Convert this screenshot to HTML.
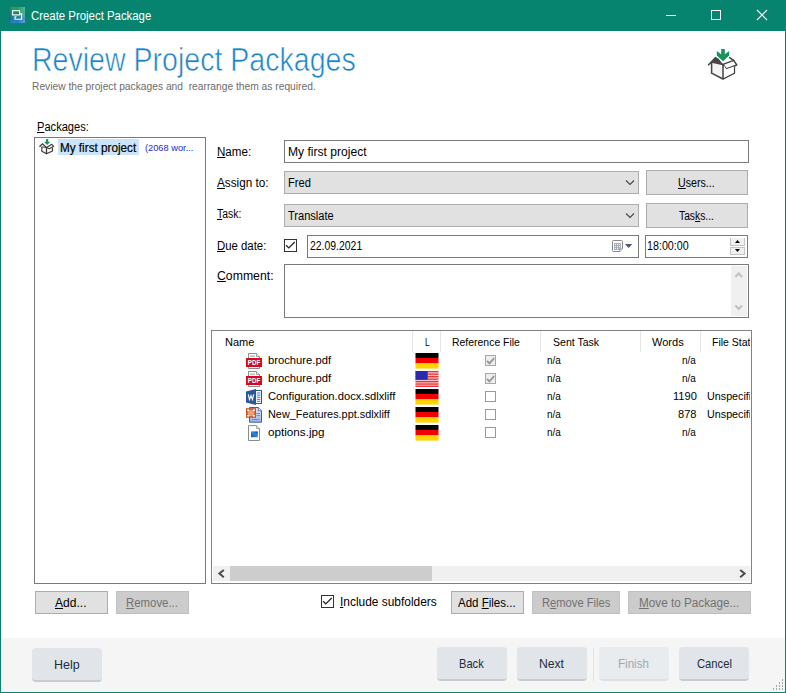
<!DOCTYPE html>
<html>
<head>
<meta charset="utf-8">
<title>Create Project Package</title>
<style>
*{box-sizing:border-box;margin:0;padding:0}
html,body{width:786px;height:693px;overflow:hidden;background:#fff}
body{position:relative;font-family:"Liberation Sans",sans-serif;font-size:12px;color:#000}
.a{position:absolute}
.t{position:absolute;white-space:nowrap;line-height:normal;transform-origin:0 0}
.t u{text-decoration:underline;text-underline-offset:1px;text-decoration-thickness:1px}
#tb{left:0;top:0;width:786px;height:31px;background:#07846f}
#bl{left:0;top:31px;width:1px;height:662px;background:#07846f}
#brd{left:785px;top:31px;width:1px;height:662px;background:#07846f}
#bb{left:0;top:692px;width:786px;height:1px;background:#07846f}
#foot{left:1px;top:638px;width:784px;height:54px;background:#f5f5f5}
.box{position:absolute;background:#fff;border:1px solid #7a7a7a}
.cmb{position:absolute;background:#e1e1e1;border:1px solid #adadad}
.btn{position:absolute;background:#e1e1e1;border:1px solid #adadad}
.btn.dis{background:#cccccc;border-color:#bfbfbf}
.fb{position:absolute;top:647px;width:70px;height:34px;background:#e1e5e9;border-radius:4px;border-bottom:2px solid #c6ccd2}
.fb.dis{background:#e9ecef;border-bottom-color:#dde1e5}
.cb{position:absolute;width:13px;height:13px;border:1px solid #333;background:#fff}
.lcb{position:absolute;left:485px;width:11px;height:11px;border:1px solid #9a9a9a;background:#fff}
.lcb.on{background:#eeeeee;border-color:#a8a8a8}
.hs{position:absolute;top:331px;width:1px;height:21px;background:#e5e5e5}
.sel{left:58px;top:139px;width:81px;height:16px;background:#cce4f7}
svg{position:absolute;overflow:visible}
</style>
</head>
<body>
<!-- window chrome -->
<div class="a" id="tb"></div>
<div class="a" id="bl"></div>
<div class="a" id="brd"></div>
<div class="a" id="foot"></div>
<div class="a" id="bb"></div>

<!-- app icon -->
<svg style="left:9px;top:7px" width="16" height="16" viewBox="0 0 16 16">
<defs>
<linearGradient id="ag" x1="0" y1="0" x2="0" y2="1"><stop offset="0" stop-color="#1da24a"/><stop offset="0.45" stop-color="#188c7c"/><stop offset="0.75" stop-color="#1a6fb0"/><stop offset="1" stop-color="#2380cc"/></linearGradient>
<linearGradient id="ag2" x1="0" y1="0" x2="1" y2="0"><stop offset="0" stop-color="#003060" stop-opacity="0.25"/><stop offset="0.5" stop-color="#fff" stop-opacity="0"/><stop offset="1" stop-color="#fff" stop-opacity="0.28"/></linearGradient>
</defs>
<rect x="0" y="0" width="16" height="16" fill="url(#ag)"/>
<rect x="0" y="0" width="16" height="16" fill="url(#ag2)"/>
<rect x="3.6" y="3.7" width="7" height="4.2" fill="#0f7a4c" fill-opacity="0.55" stroke="#fff" stroke-width="1.15"/>
<path d="M11 6.9 H12.6 V12.2 H6 V10.2 L7.4 9.4" fill="none" stroke="#fff" stroke-width="1.15"/>
</svg>

<!-- caption buttons -->
<svg style="left:660px;top:0" width="126" height="31" viewBox="0 0 126 31">
<path d="M6 15.5 H16" stroke="#fff" stroke-width="1" fill="none"/>
<rect x="51.5" y="10.5" width="9" height="9" stroke="#fff" stroke-width="1" fill="none"/>
<path d="M97 10 L107 20 M107 10 L97 20" stroke="#fff" stroke-width="1.1" fill="none"/>
</svg>

<!-- header package icon (30x31) -->
<svg style="left:708px;top:49px" width="30" height="31" viewBox="0 0 30 31">
<g id="pkg">
<path d="M3.8 12.6 L7.6 8.6 L10.4 9.4 L15 15.2 Z" fill="#444"/>
<path d="M3.6 13 V24.2 L15 30 L26.4 24.2 V17.6" fill="#f4f4f4" stroke="#444" stroke-width="1.5" stroke-linejoin="round"/>
<path d="M15 15.4 L25.7 11.4 L28.8 16 L18.3 20 Z" fill="#fafafa" stroke="#444" stroke-width="1.4" stroke-linejoin="round"/>
<path d="M15.7 16.2 L18.3 20.2 L25.7 17.4 V23.8 L15.7 28.9 Z" fill="#fff"/><path d="M15 15.6 V30" stroke="#444" stroke-width="1.5" fill="none"/>
<path d="M3.6 12.9 L15 15.5" stroke="#444" stroke-width="1.5" fill="none"/>
<path d="M0.6 15.8 L7.6 8.6" stroke="#444" stroke-width="1.6" fill="none" stroke-linecap="round"/>
<path d="M21.6 8.6 L25.7 11.4" stroke="#444" stroke-width="1.5" fill="none" stroke-linecap="round"/>
<path d="M13.2 0 H16.8 V5.2 L21.2 2 V6.4 L15 12.2 L8.8 6.4 V2 L13.2 5.2 Z" fill="#17935c"/>
</g>
</svg>

<!-- packages list -->
<div class="box" style="left:34px;top:137px;width:172px;height:447px"></div>
<div class="a sel"></div>
<svg style="left:39px;top:139px" width="15" height="16" viewBox="0 0 15 16">
<path d="M2.8 7.8 V12.2 L7.5 14.8 L13.5 11.9 V8.8" fill="#f7f7f7" stroke="#3a3a3a" stroke-width="1.15" stroke-linejoin="round"/>
<path d="M7.5 8.5 L12.8 5.3 L14.7 7.3 L10.3 9.7 Z" fill="#fff" stroke="#3a3a3a" stroke-width="1.05" stroke-linejoin="round"/>
<path d="M7.5 8.5 V14.8" stroke="#3a3a3a" stroke-width="1.2" fill="none"/>
<path d="M0.5 7.8 L3.4 4.9 L7.5 8.5" stroke="#3a3a3a" stroke-width="1.25" fill="none" stroke-linejoin="miter"/>
<path d="M2.8 7.8 L7.5 8.6" stroke="#3a3a3a" stroke-width="0.9" fill="none"/>
<path d="M7.1 0 H9.2 V2.7 H11.3 L8.15 6 L5 2.7 H7.1 Z" fill="#17935c"/>
</svg>

<!-- form -->
<div class="box" style="left:284px;top:140px;width:465px;height:23px"></div>
<div class="cmb" style="left:284px;top:171px;width:355px;height:23px"></div>
<div class="btn" style="left:646px;top:170px;width:102px;height:25px"></div>
<div class="cmb" style="left:284px;top:204px;width:355px;height:23px"></div>
<div class="btn" style="left:646px;top:203px;width:102px;height:25px"></div>
<svg style="left:625px;top:179px" width="10" height="8" viewBox="0 0 10 8"><path d="M1 1.5 L5 5.5 L9 1.5" fill="none" stroke="#444" stroke-width="1.1"/></svg>
<svg style="left:625px;top:212px" width="10" height="8" viewBox="0 0 10 8"><path d="M1 1.5 L5 5.5 L9 1.5" fill="none" stroke="#444" stroke-width="1.1"/></svg>

<div class="cb" style="left:284px;top:239px"></div>
<svg style="left:284px;top:239px" width="13" height="13" viewBox="0 0 13 13"><path d="M2.1 6.2 L4.8 8.9 L10.7 3" fill="none" stroke="#222" stroke-width="1.25"/></svg>
<div class="box" style="left:307px;top:235px;width:332px;height:23px"></div>
<div class="box" style="left:645px;top:235px;width:103px;height:23px"></div>
<!-- calendar icon -->
<svg style="left:612px;top:240px" width="21" height="12" viewBox="0 0 21 12">
<path d="M1.5 0.5 H9.5 Q10.5 0.5 10.5 1.5 V8.5 L8 11.5 H1.5 Q0.5 11.5 0.5 10.5 V1.5 Q0.5 0.5 1.5 0.5 Z" fill="#fff" stroke="#888" stroke-width="1"/>
<rect x="2" y="3" width="7" height="7" fill="#a9b1bd"/>
<g fill="#eef1f5"><rect x="3" y="4" width="1" height="1"/><rect x="5" y="4" width="1" height="1"/><rect x="7" y="4" width="1" height="1"/><rect x="3" y="6" width="1" height="1"/><rect x="5" y="6" width="1" height="1"/><rect x="7" y="6" width="1" height="1"/><rect x="3" y="8" width="1" height="1"/><rect x="5" y="8" width="1" height="1"/></g>
<path d="M8 11.5 V9 H10.5" fill="#fff" stroke="#888" stroke-width="0.8"/>
<path d="M13 4 H20.2 L16.6 8 Z" fill="#48547a"/>
</svg>
<!-- spinner -->
<div class="a" style="left:730px;top:238px;width:15px;height:8px;background:#f0f0f0;border:1px solid #c4c4c4;border-top:none"></div>
<div class="a" style="left:730px;top:247px;width:15px;height:8px;background:#f0f0f0;border:1px solid #c4c4c4"></div>
<svg style="left:730px;top:237px" width="15" height="18" viewBox="0 0 15 18"><path d="M5 6 L7.5 3 L10 6 Z" fill="#000"/><path d="M5 12 L7.5 15 L10 12 Z" fill="#000"/></svg>

<!-- comment -->
<div class="box" style="left:284px;top:264px;width:465px;height:54px"></div>
<div class="a" style="left:731px;top:266px;width:16px;height:50px;background:#f0f0f0"></div>
<svg style="left:731px;top:266px" width="16" height="50" viewBox="0 0 16 50"><path d="M4.3 11 L7.7 7.4 L11.1 11" fill="none" stroke="#c0c0c0" stroke-width="2.1"/><path d="M4.3 39.4 L7.7 43 L11.1 39.4" fill="none" stroke="#c0c0c0" stroke-width="2.1"/></svg>

<!-- file list -->
<div class="box" style="left:211px;top:330px;width:541px;height:254px;border-color:#828282"></div>
<div class="hs" style="left:412px"></div>
<div class="hs" style="left:440px"></div>
<div class="hs" style="left:540px"></div>
<div class="hs" style="left:640px"></div>
<div class="hs" style="left:700px"></div>
<!-- scrollbar -->
<div class="a" style="left:213px;top:566px;width:537px;height:15px;background:#f0f0f0"></div>
<div class="a" style="left:230px;top:566px;width:202px;height:15px;background:#cdcdcd"></div>
<svg style="left:213px;top:566px" width="537" height="16" viewBox="0 0 537 16"><path d="M10.8 4 L6.4 7.6 L10.8 11.2" fill="none" stroke="#4a4a4a" stroke-width="2"/><path d="M527.2 4 L531.6 7.6 L527.2 11.2" fill="none" stroke="#4a4a4a" stroke-width="2"/></svg>

<!-- file icons -->
<svg style="left:246px;top:353px" width="16" height="16" viewBox="0 0 16 16"><g id="pdf">
<path d="M2.5 0.5 H10.5 L13.5 3.5 V15.5 H2.5 Z" fill="#fff" stroke="#8c8c8c" stroke-width="1"/>
<path d="M10.5 0.5 V3.5 H13.5" fill="#f0f0f0" stroke="#8c8c8c" stroke-width="0.8"/>
<rect x="4" y="2.6" width="5" height="1" fill="#9a9a9a"/>
<rect x="0" y="5" width="16" height="9" fill="#d10a1f"/>
<text x="8" y="12.4" font-family="Liberation Sans, sans-serif" font-weight="bold" font-size="7.4" text-anchor="middle" fill="#fff" textLength="12.4" lengthAdjust="spacingAndGlyphs">PDF</text>
</g></svg>
<svg style="left:246px;top:371px" width="16" height="16" viewBox="0 0 16 16"><use href="#pdf"/></svg>
<!-- word -->
<svg style="left:246px;top:389px" width="16" height="16" viewBox="0 0 16 16">
<rect x="9" y="1.5" width="6.5" height="13" fill="#fff" stroke="#2b579a" stroke-width="1"/>
<g stroke="#2b579a" stroke-width="0.85"><path d="M10.8 4 H14.4 M10.8 6.1 H14.4 M10.8 8.2 H14.4 M10.8 10.3 H14.4 M10.8 12.3 H14.4"/></g>
<path d="M0 2.4 L10 0 V16 L0 13.6 Z" fill="#2b579a"/>
<path d="M2.3 5.4 L3.5 10.6 L5 6.6 L6.4 10.6 L7.7 5.4" fill="none" stroke="#fff" stroke-width="1.15" stroke-linejoin="miter"/>
</svg>
<!-- ppt -->
<svg style="left:246px;top:407px" width="16" height="16" viewBox="0 0 16 16">
<defs><linearGradient id="pg" x1="0" y1="0" x2="0" y2="1"><stop offset="0" stop-color="#dfe8f8"/><stop offset="1" stop-color="#9cb6e6"/></linearGradient></defs>
<path d="M3.5 0.5 H12.3 L15.5 3.7 V15.2 H3.5 Z" fill="url(#pg)" stroke="#3f5f9f" stroke-width="1"/>
<path d="M12.3 0.5 V3.7 H15.5" fill="#eef3fc" stroke="#3f5f9f" stroke-width="0.8"/>
<g stroke="#6a86c2" stroke-width="0.9"><path d="M10.5 6.5 H14 M10.5 8.5 H14 M6 12.5 H13.5"/></g>
<rect x="0" y="1.2" width="10" height="9.6" fill="#c4552a"/>
<rect x="1.6" y="2.8" width="6.8" height="6.4" rx="2.6" fill="#f0a070"/>
<g fill="#fff"><rect x="1.2" y="2.4" width="1.8" height="1.6"/><rect x="7" y="2.4" width="1.8" height="1.6"/><rect x="1.2" y="8" width="1.8" height="1.6"/><rect x="7" y="8" width="1.8" height="1.6"/></g>
</svg>
<!-- jpg -->
<svg style="left:246px;top:425px" width="16" height="16" viewBox="0 0 16 16">
<defs><linearGradient id="jg" x1="0" y1="1" x2="1" y2="0"><stop offset="0" stop-color="#174f9c"/><stop offset="0.55" stop-color="#2c8de2"/><stop offset="1" stop-color="#0e3f86"/></linearGradient></defs>
<path d="M2.5 0.6 H10.6 L13.5 3.5 V15.5 H2.5 Z" fill="#fff" stroke="#8c8c8c" stroke-width="1"/>
<path d="M10.6 0.6 V3.5 H13.5" fill="#f2f2f2" stroke="#8c8c8c" stroke-width="0.8"/>
<rect x="5" y="6.4" width="6.8" height="5.8" fill="url(#jg)"/>
</svg>

<!-- flags -->
<svg style="left:415px;top:353px" width="24" height="16" viewBox="0 0 24 16"><g id="de"><rect x="0.5" width="23" height="5" fill="#000"/><rect x="0.5" y="5" width="23" height="5.4" fill="#f40000"/><rect x="0.5" y="10.4" width="23" height="5.2" fill="#ffd400"/></g></svg>
<svg style="left:415px;top:371px" width="24" height="16" viewBox="0 0 24 16">
<rect x="0.5" y="0" width="23" height="16" fill="#fbc4c4"/>
<g fill="#e8363c"><rect x="0.5" y="0" width="23" height="1.3"/><rect x="0.5" y="2.5" width="23" height="1.3"/><rect x="0.5" y="5" width="23" height="1.3"/><rect x="0.5" y="7.5" width="23" height="1.3"/><rect x="0.5" y="10" width="23" height="1.3"/><rect x="0.5" y="12.4" width="23" height="1.3"/><rect x="0.5" y="14.7" width="23" height="1.3"/></g>
<rect x="0.5" y="0" width="12.2" height="8.8" fill="#2a2aae"/>
</svg>
<svg style="left:415px;top:389px" width="24" height="16" viewBox="0 0 24 16"><use href="#de"/></svg>
<svg style="left:415px;top:407px" width="24" height="16" viewBox="0 0 24 16"><use href="#de"/></svg>
<svg style="left:415px;top:425px" width="24" height="16" viewBox="0 0 24 16"><use href="#de"/></svg>

<!-- list checkboxes -->
<div class="lcb on" style="top:355px"></div>
<div class="lcb on" style="top:373px"></div>
<div class="lcb" style="top:391px"></div>
<div class="lcb" style="top:409px"></div>
<div class="lcb" style="top:427px"></div>
<svg style="left:485px;top:355px" width="11" height="11" viewBox="0 0 11 11"><path id="lck" d="M2 5.9 L4.4 8.4 L9.2 3.2" fill="none" stroke="#979797" stroke-width="1.9"/></svg>
<svg style="left:485px;top:373px" width="11" height="11" viewBox="0 0 11 11"><use href="#lck"/></svg>

<!-- bottom row -->
<div class="btn" style="left:35px;top:591px;width:73px;height:23px"></div>
<div class="btn dis" style="left:116px;top:591px;width:73px;height:23px"></div>
<div class="cb" style="left:321px;top:595px"></div>
<svg style="left:321px;top:595px" width="13" height="13" viewBox="0 0 13 13"><path d="M2.1 6.2 L4.8 8.9 L10.7 3" fill="none" stroke="#222" stroke-width="1.25"/></svg>
<div class="btn" style="left:451px;top:591px;width:73px;height:23px"></div>
<div class="btn dis" style="left:532px;top:591px;width:88px;height:23px"></div>
<div class="btn dis" style="left:628px;top:591px;width:123px;height:23px"></div>

<!-- footer buttons -->
<div class="fb" style="left:32px;top:648px"></div>
<div class="fb" style="left:437px"></div>
<div class="fb" style="left:517px"></div>
<div class="a" style="left:593px;top:648px;width:1px;height:33px;background:#e2e4e6"></div>
<div class="fb dis" style="left:599px"></div>
<div class="fb" style="left:679px"></div>
<!-- resize grip -->
<svg style="left:772px;top:678px" width="12" height="12" viewBox="0 0 12 12"><g fill="#a8a8a8">
<rect x="10" y="1" width="1" height="2"/>
<rect x="7" y="4" width="1" height="2"/><rect x="10" y="4" width="1" height="2"/>
<rect x="4" y="7" width="1" height="2"/><rect x="7" y="7" width="1" height="2"/><rect x="10" y="7" width="1" height="2"/>
<rect x="1" y="10" width="1" height="2"/><rect x="4" y="10" width="1" height="2"/><rect x="7" y="10" width="1" height="2"/><rect x="10" y="10" width="1" height="2"/>
</g></svg>

<!-- texts -->
<span class="t" style="left:30.60px;top:8.94px;font-size:12px;color:#fff;transform:scaleX(0.9492);">Create Project Package</span>
<span class="t" style="left:31.77px;top:41.43px;font-size:33px;color:#1b84c8;transform:scaleX(0.8650);-webkit-text-stroke:0.6px #fff;">Review Project Packages</span>
<span class="t" style="left:32.00px;top:80.32px;font-size:10.7px;color:#6c6c6c;transform:scaleX(0.9590);">Review the project packages and&nbsp; rearrange them as required.</span>
<span class="t" style="left:37.20px;top:120.14px;font-size:12px;color:#000;transform:scaleX(0.9246);"><u>P</u>ackages:</span>
<span class="t" style="left:60.30px;top:140.74px;font-size:12px;color:#000;transform:scaleX(0.9761);-webkit-text-stroke:0.2px #000;">My first project</span>
<span class="t" style="left:145.40px;top:142.86px;font-size:9.1px;color:#2828cc;transform:scaleX(1.0173);">(2068 wor...</span>
<span class="t" style="left:217.00px;top:144.74px;font-size:12px;color:#000;transform:scaleX(0.9654);"><u>N</u>ame:</span>
<span class="t" style="left:217.00px;top:175.84px;font-size:12px;color:#000;transform:scaleX(0.9779);"><u>A</u>ssign to:</span>
<span class="t" style="left:217.00px;top:207.44px;font-size:12px;color:#000;transform:scaleX(0.8672);"><u>T</u>ask:</span>
<span class="t" style="left:217.00px;top:239.44px;font-size:12px;color:#000;transform:scaleX(0.9477);"><u>D</u>ue date:</span>
<span class="t" style="left:217.00px;top:268.94px;font-size:12px;color:#000;transform:scaleX(1.0216);"><u>C</u>omment:</span>
<span class="t" style="left:287.80px;top:144.74px;font-size:12px;color:#000;transform:scaleX(1.0066);">My first project</span>
<span class="t" style="left:288.30px;top:175.84px;font-size:12px;color:#000;transform:scaleX(0.9250);">Fred</span>
<span class="t" style="left:288.00px;top:208.84px;font-size:12px;color:#000;transform:scaleX(0.9218);">Translate</span>
<span class="t" style="left:309.80px;top:239.44px;font-size:12px;color:#000;transform:scaleX(0.8694);">22.09.2021</span>
<span class="t" style="left:647.40px;top:239.44px;font-size:12px;color:#000;transform:scaleX(0.8929);">18:00:00</span>
<span class="t" style="left:678.20px;top:176.14px;font-size:12px;color:#000;transform:scaleX(0.8877);"><u>U</u>sers...</span>
<span class="t" style="left:678.60px;top:208.74px;font-size:12px;color:#000;transform:scaleX(0.8577);">Tas<u>k</u>s...</span>
<span class="t" style="left:224.50px;top:335.65px;font-size:11px;color:#000;transform:scaleX(1.0026);">Name</span>
<span class="t" style="left:424.80px;top:335.65px;font-size:11px;color:#000;transform:scaleX(0.7667);">L</span>
<span class="t" style="left:452.30px;top:335.65px;font-size:11px;color:#000;transform:scaleX(0.9494);">Reference File</span>
<span class="t" style="left:552.60px;top:335.65px;font-size:11px;color:#000;transform:scaleX(0.9590);">Sent Task</span>
<span class="t" style="left:652.00px;top:335.65px;font-size:11px;color:#000;transform:scaleX(1.0037);">Words</span>
<span class="t" style="left:712.40px;top:335.65px;font-size:11px;color:#000;transform:scaleX(0.9549);">File Status</span>
<span class="t" style="left:267.50px;top:354.44px;font-size:11px;color:#000;transform:scaleX(1.0206);">brochure.pdf</span>
<span class="t" style="left:546.50px;top:354.44px;font-size:11px;color:#000;transform:scaleX(0.9027);">n/a</span>
<span class="t" style="left:681.70px;top:354.44px;font-size:11px;color:#000;transform:scaleX(0.9027);">n/a</span>
<span class="t" style="left:267.50px;top:372.44px;font-size:11px;color:#000;transform:scaleX(1.0206);">brochure.pdf</span>
<span class="t" style="left:546.50px;top:372.44px;font-size:11px;color:#000;transform:scaleX(0.9027);">n/a</span>
<span class="t" style="left:681.70px;top:372.44px;font-size:11px;color:#000;transform:scaleX(0.9027);">n/a</span>
<span class="t" style="left:267.50px;top:390.44px;font-size:11px;color:#000;transform:scaleX(1.0176);">Configuration.docx.sdlxliff</span>
<span class="t" style="left:546.50px;top:390.44px;font-size:11px;color:#000;transform:scaleX(0.9027);">n/a</span>
<span class="t" style="left:672.60px;top:390.44px;font-size:11px;color:#000;transform:scaleX(1.0069);">1190</span>
<span class="t" style="left:706.60px;top:390.44px;font-size:11px;color:#000;transform:scaleX(0.9781);">Unspecified</span>
<span class="t" style="left:267.50px;top:408.44px;font-size:11px;color:#000;transform:scaleX(0.9868);">New_Features.ppt.sdlxliff</span>
<span class="t" style="left:546.50px;top:408.44px;font-size:11px;color:#000;transform:scaleX(0.9027);">n/a</span>
<span class="t" style="left:677.90px;top:408.44px;font-size:11px;color:#000;transform:scaleX(1.0090);">878</span>
<span class="t" style="left:706.60px;top:408.44px;font-size:11px;color:#000;transform:scaleX(0.9781);">Unspecified</span>
<span class="t" style="left:267.50px;top:426.44px;font-size:11px;color:#000;transform:scaleX(1.0624);">options.jpg</span>
<span class="t" style="left:546.50px;top:426.44px;font-size:11px;color:#000;transform:scaleX(0.9027);">n/a</span>
<span class="t" style="left:681.70px;top:426.44px;font-size:11px;color:#000;transform:scaleX(0.9027);">n/a</span>
<span class="t" style="left:339.91px;top:594.74px;font-size:12px;color:#000;transform:scaleX(0.9938);"><u>I</u>nclude subfolders</span>
<span class="t" style="left:54.80px;top:596.14px;font-size:12px;color:#000;transform:scaleX(1.0058);"><u>A</u>dd...</span>
<span class="t" style="left:126.00px;top:596.14px;font-size:12px;color:#727272;transform:scaleX(0.9494);"><u>R</u>emove...</span>
<span class="t" style="left:458.00px;top:596.14px;font-size:12px;color:#000;transform:scaleX(0.9600);">Add <u>F</u>iles...</span>
<span class="t" style="left:541.50px;top:596.14px;font-size:12px;color:#727272;transform:scaleX(0.9311);">R<u>e</u>move Files</span>
<span class="t" style="left:639.20px;top:596.14px;font-size:12px;color:#727272;transform:scaleX(0.9767);"><u>M</u>ove to Package...</span>
<span class="t" style="left:54.04px;top:657.24px;font-size:13px;color:#222c3a;transform:scaleX(0.9566);">Help</span>
<span class="t" style="left:459.34px;top:656.13px;font-size:13px;color:#222c3a;transform:scaleX(0.8556);">Back</span>
<span class="t" style="left:539.27px;top:656.13px;font-size:13px;color:#222c3a;transform:scaleX(0.9342);">Next</span>
<span class="t" style="left:618.31px;top:656.13px;font-size:13px;color:#a2a8ae;transform:scaleX(0.8910);">Finish</span>
<span class="t" style="left:696.80px;top:656.13px;font-size:13px;color:#222c3a;transform:scaleX(0.8625);">Cancel</span>
<div class="a" style="left:750px;top:331px;width:35px;height:252px;background:#fff"></div><div class="a" style="left:751px;top:331px;width:1px;height:252px;background:#828282"></div>
</body>
</html>
